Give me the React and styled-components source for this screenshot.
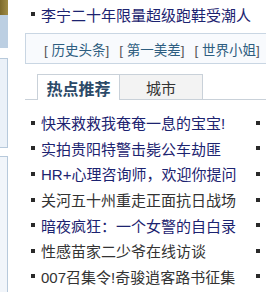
import styled, { createGlobalStyle } from "styled-components";

const GlobalStyle = createGlobalStyle`
  html, body {
    margin: 0;
    padding: 0;
    background: #fff;
    overflow: hidden;
  }
  body {
    font-family: "Liberation Sans", "Noto Sans CJK SC", sans-serif;
  }
`;

const Page = styled.div`
  display: flex;
  width: 266px;
  height: 292px;
  overflow: hidden;
`;

const SideStrip = styled.div`
  display: flex;
  flex-direction: column;
  width: 8px;
  flex-shrink: 0;
`;

const StripPart = styled.div`
  height: ${(p) => (p.$h ? `${p.$h}px` : "auto")};
  flex: ${(p) => (p.$h ? "none" : 1)};
  background: ${(p) => p.$bg || "transparent"};
  border-right: ${(p) => (p.$boxed ? "1px solid #b7c9db" : "none")};
  border-top: ${(p) => (p.$boxed ? "1px solid #b7c9db" : "none")};
  border-bottom: ${(p) => (p.$closed ? "1px solid #b7c9db" : "none")};
  box-sizing: border-box;
`;

const Main = styled.div`
  margin-left: 17px;
  width: 320px;
  flex-shrink: 0;
  display: flex;
  flex-direction: column;
`;

const HeadLine = styled.div`
  height: 33px;
  display: flex;
  align-items: center;
  padding-left: 6px;
  padding-bottom: 5px;
  box-sizing: border-box;
  font-size: 15px;
  color: #1c2370;
  white-space: nowrap;
`;

const Bullet = styled.span`
  width: 4px;
  height: 4px;
  background: #2a2a2a;
  flex-shrink: 0;
  margin-right: 6px;
`;

const LinkBox = styled.div`
  height: 31px;
  box-sizing: border-box;
  border: 1px solid #c9d6e3;
  border-right: none;
  background: #f8fafd;
  display: flex;
  align-items: center;
  gap: 10px;
  padding-left: 18px;
  font-size: 13.5px;
  color: #555;
  white-space: pre;
`;

const LinkItem = styled.span`
  display: inline;
`;

const LinkText = styled.a`
  color: #2d5d80;
  text-decoration: none;
`;

const Tabs = styled.div`
  margin-top: 10px;
  display: flex;
  padding-left: 12px;
  border-bottom: 1px solid #c9d1d9;
  height: 25px;
`;

const Tab = styled.div`
  width: 83px;
  height: ${(p) => (p.$active ? "26px" : "25px")};
  box-sizing: border-box;
  border: 1px solid #c9d1d9;
  border-bottom: none;
  border-left: ${(p) => (p.$active ? "1px solid #c9d1d9" : "none")};
  background: ${(p) => (p.$active ? "#fff" : "#f3f3f3")};
  display: flex;
  align-items: center;
  justify-content: center;
  font-size: ${(p) => (p.$active ? "16px" : "15px")};
  font-weight: ${(p) => (p.$active ? 700 : 400)};
  color: ${(p) => (p.$active ? "#2c4a68" : "#333")};
  position: relative;
  z-index: 1;
`;

const List = styled.ul`
  list-style: none;
  margin: 0;
  padding: 10px 0 0 6px;
  display: grid;
  grid-template-columns: 225px 225px;
  grid-auto-flow: column;
  grid-template-rows: repeat(7, 25.6px);
`;

const Item = styled.li`
  display: flex;
  align-items: center;
  font-size: 15px;
  white-space: nowrap;
  overflow: hidden;
  color: ${(p) => (p.$visited ? "#333" : "#1c2370")};
`;

const leftItems = [
  { t: "快来救救我奄奄一息的宝宝!" },
  { t: "实拍贵阳特警击毙公车劫匪" },
  { t: "HR+心理咨询师，欢迎你提问" },
  { t: "关河五十州重走正面抗日战场", v: true },
  { t: "暗夜疯狂：一个女警的自白录" },
  { t: "性感苗家二少爷在线访谈", v: true },
  { t: "007召集令!奇骏逍客路书征集", v: true },
];

const links = ["历史头条", "第一美差", "世界小姐"];

export default function App() {
  return (
    <>
      <GlobalStyle />
      <Page>
        <SideStrip>
          <StripPart $h={15} $bg="linear-gradient(90deg, #7d6a2c, #a08c45)" />
          <StripPart $h={33} $bg="#bccfe2" />
          <StripPart $h={10} />
          <StripPart $h={90} $bg="#ebf1f8" $boxed $closed />
          <StripPart $h={8} />
          <StripPart $bg="#f1f5fa" $boxed />
        </SideStrip>
        <Main>
          <HeadLine>
            <Bullet />
            李宁二十年限量超级跑鞋受潮人
          </HeadLine>
          <LinkBox>
            {links.map((l) => (
              <LinkItem key={l}>
                {"[ "}
                <LinkText>{l}</LinkText>
                {"]"}
              </LinkItem>
            ))}
          </LinkBox>
          <Tabs>
            <Tab $active>热点推荐</Tab>
            <Tab>城市</Tab>
          </Tabs>
          <List>
            {leftItems.map((it) => (
              <Item key={it.t} $visited={it.v}>
                <Bullet />
                {it.t}
              </Item>
            ))}
            {leftItems.map((it, i) => (
              <Item key={`r${i}`}>
                <Bullet />
              </Item>
            ))}
          </List>
        </Main>
      </Page>
    </>
  );
}
